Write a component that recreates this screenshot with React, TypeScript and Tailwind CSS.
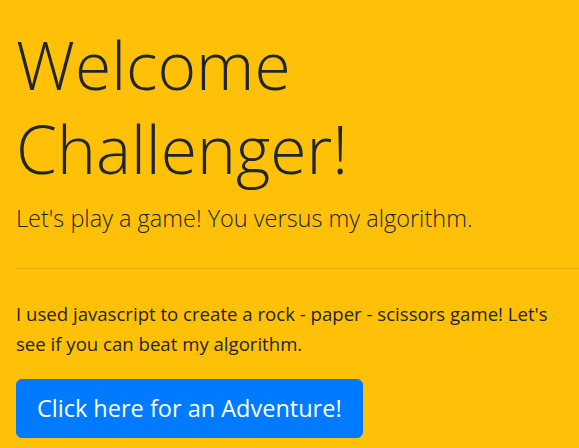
export default function App() {
  return (
    <div className="min-h-screen bg-[#ffc107] text-[#212529] font-['Open_Sans',sans-serif]">
      <div className="pl-4 pt-[22px] pb-10">
        <h1 className="text-[66px] leading-[84px] font-light mb-[10px]">Welcome Challenger!</h1>
        <p className="text-[23.5px] leading-[37.5px] font-light">Let's play a game! You versus my algorithm.</p>
        <hr className="my-[30px] border-0 border-t border-black/10" />
        <p className="text-[18.6px] leading-[30px] mb-5 pr-4">
          I used javascript to create a rock - paper - scissors game! Let's see if you can beat my algorithm.
        </p>
        <button className="bg-[#007bff] text-white text-[23.5px] leading-[37.5px] px-5 py-[10px] border border-[#007bff] rounded-[6px]">
          Click here for an Adventure!
        </button>
      </div>
    </div>
  );
}
